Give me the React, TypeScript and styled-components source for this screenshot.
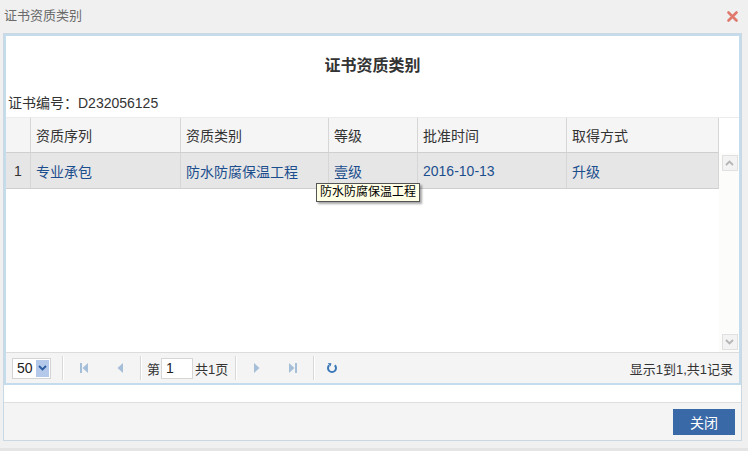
import styled, { createGlobalStyle } from 'styled-components'

const GlobalStyle = createGlobalStyle`
  html, body {
    margin: 0;
    padding: 0;
    background: #f0f0f0;
  }
  body {
    font-family: "Liberation Sans", "Noto Sans CJK SC", sans-serif;
    color: #333;
  }
  * {
    box-sizing: border-box;
  }
`

type Column = {
  title: string
  width: number
}

const columns: Column[] = [
  { title: '资质序列', width: 150 },
  { title: '资质类别', width: 148 },
  { title: '等级', width: 89 },
  { title: '批准时间', width: 149 },
  { title: '取得方式', width: 152 },
]

const row = ['专业承包', '防水防腐保温工程', '壹级', '2016-10-13', '升级']

const CloseIcon = () => (
  <svg width="11" height="11" viewBox="0 0 11 11">
    <path d="M1.5 1.5 L9.5 9.5 M9.5 1.5 L1.5 9.5" stroke="#e07a6c" strokeWidth="2.6" strokeLinecap="round" />
  </svg>
)

const FirstIcon = () => (
  <svg width="10" height="12" viewBox="0 0 10 12">
    <rect x="1" y="1" width="2" height="10" fill="#a6bfd8" />
    <path d="M9 1 L3.5 6 L9 11 Z" fill="#a6bfd8" />
  </svg>
)

const PrevIcon = () => (
  <svg width="8" height="12" viewBox="0 0 8 12">
    <path d="M7 1 L1.5 6 L7 11 Z" fill="#a6bfd8" />
  </svg>
)

const NextIcon = () => (
  <svg width="8" height="12" viewBox="0 0 8 12">
    <path d="M1 1 L6.5 6 L1 11 Z" fill="#a6bfd8" />
  </svg>
)

const LastIcon = () => (
  <svg width="10" height="12" viewBox="0 0 10 12">
    <path d="M1 1 L6.5 6 L1 11 Z" fill="#a6bfd8" />
    <rect x="7" y="1" width="2" height="10" fill="#a6bfd8" />
  </svg>
)

const RefreshIcon = () => (
  <svg width="12" height="12" viewBox="0 0 12 12">
    <path d="M3.2 3.2 A4 4 0 1 0 8.8 3.2" fill="none" stroke="#3b78b8" strokeWidth="2" />
    <path d="M1.8 1 L5.4 1.2 L4.6 4.6 Z" fill="#3b78b8" />
  </svg>
)

const ChevronDown = ({ color }: { color: string }) => (
  <svg width="9" height="6" viewBox="0 0 9 6">
    <path d="M1 1 L4.5 4.5 L8 1" fill="none" stroke={color} strokeWidth="1.8" />
  </svg>
)

const ChevronUp = ({ color }: { color: string }) => (
  <svg width="9" height="6" viewBox="0 0 9 6">
    <path d="M1 5 L4.5 1.5 L8 5" fill="none" stroke={color} strokeWidth="1.8" />
  </svg>
)

const App: React.FC = () => {
  return (
    <Window>
      <GlobalStyle />
      <TitleBar>
        <TitleText>证书资质类别</TitleText>
        <CloseButton>
          <CloseIcon />
        </CloseButton>
      </TitleBar>
      <Body>
        <Panel>
          <Heading>证书资质类别</Heading>
          <CertNo>证书编号：D232056125</CertNo>
          <Grid>
            <HeaderRow>
              <NumCell />
              {columns.map((c) => (
                <HeaderCell key={c.title} width={c.width}>
                  {c.title}
                </HeaderCell>
              ))}
              <HeaderFiller />
            </HeaderRow>
            <GridBody>
              <Rows>
                <DataRow>
                  <NumCell>1</NumCell>
                  {row.map((v, i) => (
                    <DataCell key={i} width={columns[i].width}>
                      {v}
                    </DataCell>
                  ))}
                </DataRow>
                <Tooltip>防水防腐保温工程</Tooltip>
              </Rows>
              <ScrollBar>
                <ScrollButton>
                  <ChevronUp color="#b5b5b5" />
                </ScrollButton>
                <ScrollButton>
                  <ChevronDown color="#b5b5b5" />
                </ScrollButton>
              </ScrollBar>
            </GridBody>
            <Pager>
              <PageSize>
                <span>50</span>
                <SelectArrow>
                  <ChevronDown color="#2a5b9f" />
                </SelectArrow>
              </PageSize>
              <Separator />
              <PagerButton width={36}>
                <FirstIcon />
              </PagerButton>
              <PagerButton width={36}>
                <PrevIcon />
              </PagerButton>
              <Separator />
              <PagerText padLeft={3} padRight={1}>
                第
              </PagerText>
              <PageInput>1</PageInput>
              <PagerText padLeft={2} padRight={5}>
                共1页
              </PagerText>
              <Separator />
              <PagerButton width={36}>
                <NextIcon />
              </PagerButton>
              <PagerButton width={36}>
                <LastIcon />
              </PagerButton>
              <Separator />
              <PagerButton width={30}>
                <RefreshIcon />
              </PagerButton>
              <PagerInfo>显示1到1,共1记录</PagerInfo>
            </Pager>
          </Grid>
        </Panel>
        <Gap />
        <Footer>
          <PrimaryButton>关闭</PrimaryButton>
        </Footer>
      </Body>
    </Window>
  )
}

const Window = styled.div`
  width: 748px;
  height: 451px;
  background: #f0f0f0;
  display: flex;
  flex-direction: column;
  border-bottom: 3px solid #e4e4e4;
`

const TitleBar = styled.div`
  height: 33px;
  display: flex;
  align-items: center;
  justify-content: space-between;
  padding: 0 10px 2px 4px;
`

const TitleText = styled.div`
  font-size: 13px;
  line-height: 16px;
  color: #6a6a6a;
`

const CloseButton = styled.div`
  display: flex;
  align-items: center;
  margin-top: 1px;
`

const Body = styled.div`
  margin-left: 3px;
  width: 739px;
  border: 1px solid #c9d8e2;
  display: flex;
  flex-direction: column;
  background: #fff;
`

const Panel = styled.div`
  border: 2px solid #c5dcec;
  background: #fff;
  display: flex;
  flex-direction: column;
`

const Heading = styled.div`
  padding-top: 20px;
  margin-bottom: 17px;
  text-align: center;
  font-size: 16px;
  line-height: 20px;
  font-weight: bold;
  color: #333;
`

const CertNo = styled.div`
  padding-left: 2px;
  margin-bottom: 4px;
  font-size: 14px;
  line-height: 20px;
  color: #333;
`

const Grid = styled.div`
  display: flex;
  flex-direction: column;
`

const HeaderRow = styled.div`
  display: flex;
  height: 36px;
  border-top: 1px solid #ececec;
`

const NumCell = styled.div`
  width: 25px;
  flex: none;
  display: flex;
  align-items: center;
  justify-content: center;
  font-size: 14px;
  color: #333;
  background: #f5f5f5;
  border-right: 1px solid #d6d6d6;
  border-bottom: 1px solid #cfcfcf;
`

const HeaderCell = styled.div<{ width: number }>`
  width: ${(p) => p.width}px;
  flex: none;
  display: flex;
  align-items: center;
  padding-left: 5px;
  font-size: 14px;
  color: #333;
  background: #f5f5f5;
  border-right: 1px solid #d6d6d6;
  border-bottom: 1px solid #cfcfcf;
`

const HeaderFiller = styled.div`
  flex: 1;
  background: #fff;
`

const GridBody = styled.div`
  height: 199px;
  display: flex;
`

const Rows = styled.div`
  position: relative;
  width: 713px;
  flex: none;
`

const DataRow = styled.div`
  display: flex;
  height: 36px;
  background: #e6e6e6;

  & > ${NumCell} {
    background: #e6e6e6;
  }
`

const DataCell = styled.div<{ width: number }>`
  width: ${(p) => p.width}px;
  flex: none;
  display: flex;
  align-items: center;
  padding-left: 5px;
  font-size: 14px;
  color: #1c4e8e;
  border-right: 1px solid #d6d6d6;
  border-bottom: 1px solid #cfcfcf;
`

const Tooltip = styled.div`
  position: absolute;
  left: 310px;
  top: 30px;
  padding: 0 3px;
  height: 19px;
  line-height: 17px;
  font-size: 12px;
  color: #000;
  background: #ffffe6;
  border: 1px solid #555;
  box-shadow: 2px 2px 2px rgba(0, 0, 0, 0.35);
  white-space: nowrap;
`

const ScrollBar = styled.div`
  flex: 1;
  display: flex;
  flex-direction: column;
  justify-content: space-between;
  align-items: center;
  padding: 2px 0 2px 1px;
  background: #fcfcfa;
`

const ScrollButton = styled.div`
  width: 16px;
  height: 16px;
  display: flex;
  align-items: center;
  justify-content: center;
  background: #f3f3f3;
  border: 1px solid #e0e0e0;
`

const Pager = styled.div`
  height: 31px;
  display: flex;
  align-items: center;
  padding: 0 6px 0 6px;
  background: #f4f4f4;
  border-top: 1px solid #dcdcdc;
`

const PageSize = styled.div`
  width: 39px;
  height: 21px;
  display: flex;
  align-items: center;
  justify-content: space-between;
  padding: 1px 1px 1px 4px;
  background: #fff;
  border: 1px solid #d4d4d4;
  font-size: 14px;
  color: #222;
  margin-right: 9px;
`

const SelectArrow = styled.div`
  width: 13px;
  height: 17px;
  display: flex;
  align-items: center;
  justify-content: center;
  background: #b4c9ea;
`

const Separator = styled.div`
  width: 2px;
  height: 24px;
  flex: none;
  border-left: 1px solid #d8d8d8;
  border-right: 1px solid #fff;
  margin: 0 2px;
`

const PagerButton = styled.div<{ width: number }>`
  width: ${(p) => p.width}px;
  height: 22px;
  flex: none;
  display: flex;
  align-items: center;
  justify-content: center;
`

const PagerText = styled.div<{ padLeft: number; padRight: number }>`
  font-size: 13px;
  color: #333;
  padding: 0 ${(p) => p.padRight}px 0 ${(p) => p.padLeft}px;
`

const PageInput = styled.div`
  width: 32px;
  height: 21px;
  padding-left: 4px;
  background: #fff;
  border: 1px solid #d6d6d6;
  font-size: 14px;
  line-height: 19px;
  color: #222;
`

const PagerInfo = styled.div`
  margin-left: auto;
  font-size: 13px;
  color: #333;
`

const Gap = styled.div`
  height: 17px;
  background: #fff;
`

const Footer = styled.div`
  height: 38px;
  display: flex;
  align-items: center;
  justify-content: flex-end;
  padding-right: 6px;
  background: #f4f4f4;
  border-top: 1px solid #dedede;
`

const PrimaryButton = styled.div`
  width: 62px;
  height: 26px;
  display: flex;
  align-items: center;
  justify-content: center;
  background: #3a69a7;
  color: #fff;
  font-size: 14px;
`

export default App
